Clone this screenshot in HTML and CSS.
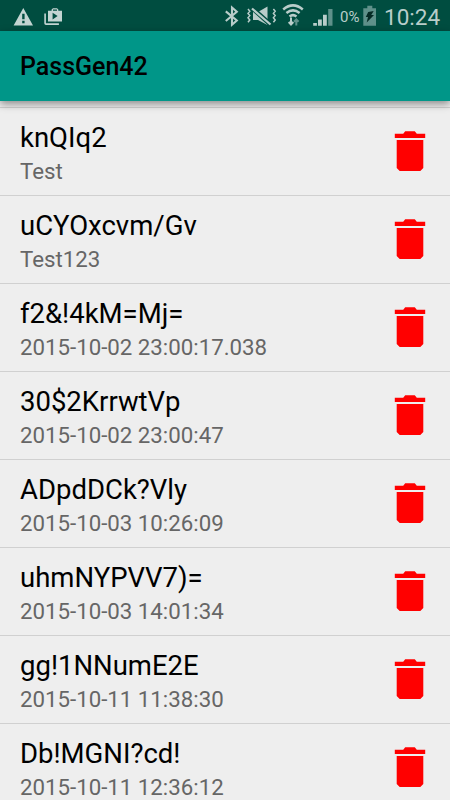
FILE: index.html
```html
<!DOCTYPE html>
<html lang="en">
<head>
<meta charset="utf-8">
<title>PassGen42</title>
<link rel="stylesheet" href="styles.css">
</head>
<body>
<svg class="defs" aria-hidden="true"><symbol id="trash" viewBox="0 0 32 42"><path d="M.8 3.7h8.4l2-2.4h9.6l2 2.4h8.4V8H.8zM2.7 10h26.6v28l-3 3H5.7l-3-3z"/></symbol></svg>
<div class="status">
  <svg class="status-icons" width="80" height="31" viewBox="0 0 80 31" fill="#c3d5d2">
    <path fill-rule="evenodd" d="M23.3 8L33 25.5H13.6zM22.2 13.8v5.5h2.4v-5.5zM22.2 20.8v2.4h2.4v-2.4z"/>
    <path d="M44.3 13.5h1.6v9.8h13v1.6H46q-1.7 0-1.7-1.7z"/>
    <path fill-rule="evenodd" d="M48 10.8h3.6V9.6L53 8.2h4l1.3 1.4v1.2H62v10.8H48zM53 9.6v1.2h4V9.6zM52.6 12.8v6.6l5-3.3z"/>
  </svg>
  <svg class="status-icons" width="240" height="31" viewBox="210 0 240 31" fill="none" stroke="#b9cdca">
    <path stroke-width="2.1" d="M225.8 11.4l11 9.1-4.8 4.2V7.5l4.8 4.2-11 9.3"/>
    <path fill="#b9cdca" stroke="none" d="M253 12h5l9.5-5.5v18.5L258 20h-5z"/>
    <path stroke="#004d40" stroke-width="4.6" d="M251.5 7.5l19 17"/>
    <path stroke-width="2.2" d="M252 8.5l18.5 16"/>
    <path stroke-width="1.5" d="M248 9l1.8 2.2-1.8 2.2 1.8 2.2-1.8 2.2 1.8 2.2-1.8 2.2M273.4 9l1.8 2.2-1.8 2.2 1.8 2.2-1.8 2.2 1.8 2.2-1.8 2.2"/>
    <path stroke-width="2.5" d="M283.2 9.5q9.8-8.2 19.6 0M286.4 13q6.6-5.2 13.2 0M289.5 16.4q3.5-2.6 7 0"/>
    <path stroke-width="2" d="M291 17.5v7M288.7 22l2.3 2.5 2.3-2.5"/>
    <path stroke="#5f918a" stroke-width="2" d="M296.3 25.5V19.5M294 21.7l2.3-2.3 2.3 2.3"/>
    <path fill="#b9cdca" stroke="none" d="M313.2 23h3.7v2.7h-3.7zM318 19.5h3.8v6.2H318zM323 14.8h3.8v10.9H323z"/>
    <path fill="#5f918a" stroke="none" d="M328.2 9h4.3v16.7h-4.3zM367.3 5.7h5v2.5h3.7v17.5h-12.7V8.2h4z"/>
    <path fill="#052a24" stroke="none" d="M368.2 12l5.5-1-2.5 4h2.8l-7.3 7.5 1.3-5.4h-2.2z"/>
  </svg>
  <span class="percent">0%</span>
  <span class="clock">10:24</span>
</div>
<header class="bar"><h1>PassGen42</h1></header>
<main class="list">
  <div class="row"><div><p class="key">knQIq2</p><p class="note">Test</p></div><svg class="trash"><use href="#trash"/></svg></div>
  <div class="row"><div><p class="key">uCYOxcvm/Gv</p><p class="note">Test123</p></div><svg class="trash"><use href="#trash"/></svg></div>
  <div class="row"><div><p class="key">f2&amp;!4kM=Mj=</p><p class="note">2015-10-02 23:00:17.038</p></div><svg class="trash"><use href="#trash"/></svg></div>
  <div class="row"><div><p class="key">30$2KrrwtVp</p><p class="note">2015-10-02 23:00:47</p></div><svg class="trash"><use href="#trash"/></svg></div>
  <div class="row"><div><p class="key">ADpdDCk?Vly</p><p class="note">2015-10-03 10:26:09</p></div><svg class="trash"><use href="#trash"/></svg></div>
  <div class="row"><div><p class="key">uhmNYPVV7)=</p><p class="note">2015-10-03 14:01:34</p></div><svg class="trash"><use href="#trash"/></svg></div>
  <div class="row"><div><p class="key">gg!1NNumE2E</p><p class="note">2015-10-11 11:38:30</p></div><svg class="trash"><use href="#trash"/></svg></div>
  <div class="row"><div><p class="key">Db!MGNI?cd!</p><p class="note">2015-10-11 12:36:12</p></div><svg class="trash"><use href="#trash"/></svg></div>
</main>
</body>
</html>
```
FILE: styles.css
```css
* { box-sizing: border-box; margin: 0; }
body {
  width: 450px;
  height: 800px;
  overflow: hidden;
  background: #eee;
  font-family: Roboto, sans-serif;
  display: flex;
  flex-direction: column;
}
.defs { position: absolute; width: 0; height: 0; }
.status {
  position: relative;
  flex: none;
  height: 31px;
  background: #004d40;
  display: flex;
  justify-content: space-between;
}
.status-icons { display: block; flex: none; }
.percent, .clock { position: absolute; color: #b9cdca; white-space: nowrap; }
.percent { left: 340px; top: 7px; font-size: 15px; line-height: 20px; }
.clock { left: 384px; top: 3px; font-size: 22.5px; line-height: 28px; }
.bar {
  position: relative;
  z-index: 1;
  flex: none;
  height: 70px;
  padding-left: 20px;
  background: #009688;
  box-shadow: 0 3px 8px rgba(0, 0, 0, .42);
  display: flex;
  align-items: center;
}
.bar h1 { font-size: 25px; font-weight: 500; line-height: 30px; padding-top: 2px; }
.list { flex: none; margin-top: 6px; }
.row {
  height: 88px;
  border-top: 1px solid #d0d0d0;
  padding: 0 24px 0 20px;
  display: flex;
  justify-content: space-between;
}
.key { margin-top: 13px; font-size: 27.5px; line-height: 34px; color: #000; }
.note { margin-top: 1px; font-size: 22.25px; line-height: 30px; color: #666; }
.trash { width: 32px; height: 42px; margin-top: 22px; fill: #f00; }
```
